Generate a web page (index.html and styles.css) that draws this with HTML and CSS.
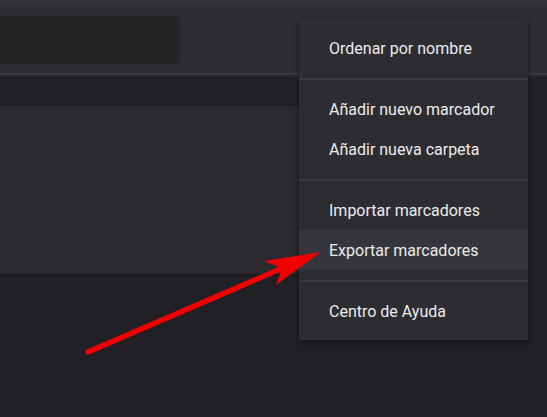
FILE: index.html
```html
<!DOCTYPE html>
<html lang="es">
<head>
<meta charset="utf-8">
<link rel="stylesheet" href="styles.css">
</head>
<body>
<div class="app">
  <header class="topbar">
    <div class="search"></div>
  </header>
  <div class="divider"></div>
  <div class="subbar"></div>
  <section class="panel"></section>
</div>

<nav class="menu">
  <div class="item">Ordenar por nombre</div>
  <div class="sep"></div>
  <div class="item">Añadir nuevo marcador</div>
  <div class="item">Añadir nueva carpeta</div>
  <div class="sep"></div>
  <div class="item">Importar marcadores</div>
  <div class="item hover">Exportar marcadores</div>
  <div class="sep"></div>
  <div class="item">Centro de Ayuda</div>
</nav>

<svg class="arrow" width="547" height="417" viewBox="0 0 547 417">
  <line x1="88" y1="352" x2="285" y2="267" stroke="#f00000" stroke-width="5.5" stroke-linecap="round"/>
  <polygon points="321,252 264,261 282,268 276,285" fill="#f00000"/>
</svg>
</body>
</html>
```

FILE: styles.css
```css
html, body {
  margin: 0;
  padding: 0;
}
body {
  width: 547px;
  height: 417px;
  overflow: hidden;
  background: #212025;
  font-family: Roboto, "Noto Sans", sans-serif;
  position: relative;
}
.app {
  display: flex;
  flex-direction: column;
}
.topbar {
  height: 73px;
  box-sizing: border-box;
  padding-top: 16px;
  background: linear-gradient(#36353b 0px, #2e2d33 6px);
}
.search {
  width: 178px;
  height: 48px;
  background: #232323;
  box-shadow: 2px 0 2px #27262b;
}
.divider {
  height: 2px;
  background: #3a393f;
  border-bottom: 2px solid #27262b;
}
.subbar {
  height: 27px;
  background: #222126;
  border-bottom: 2px solid #1f1e23;
}
.panel {
  width: 520px;
  height: 168px;
  background: #2a292e;
  border-bottom: 2px solid #1b1a1f;
}
.menu {
  position: absolute;
  left: 299px;
  top: 18px;
  width: 229px;
  box-sizing: border-box;
  padding: 10px 0 9px;
  background: #2d2c31;
  box-shadow: 0 2px 6px rgba(0, 0, 0, 0.45);
  display: flex;
  flex-direction: column;
}
.item {
  height: 40px;
  display: flex;
  align-items: center;
  padding-left: 30px;
  color: #ebebed;
  font-size: 16px;
}
.item.hover {
  background: #35363b;
}
.sep {
  height: 21px;
  display: flex;
  align-items: center;
}
.sep::before {
  content: "";
  display: block;
  width: 100%;
  height: 2px;
  background: #3a393f;
}
.arrow {
  position: absolute;
  left: 0;
  top: 0;
  pointer-events: none;
}
```
